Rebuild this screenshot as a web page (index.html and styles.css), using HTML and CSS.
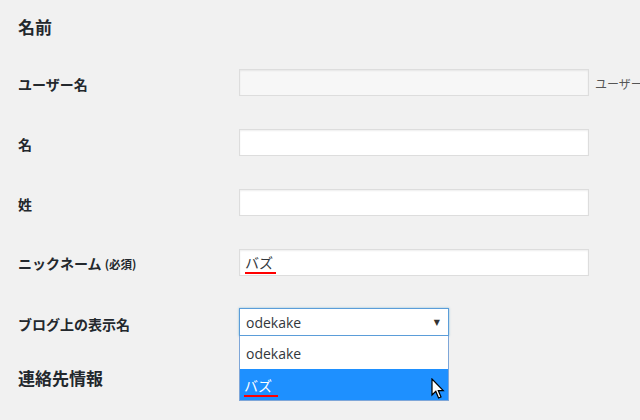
FILE: index.html
```html
<!DOCTYPE html>
<html lang="ja">
<head>
<meta charset="utf-8">
<link rel="stylesheet" href="styles.css">
</head>
<body>
<div class="page">
  <h2 class="heading first">名前</h2>
  <div class="rows">
    <div class="row">
      <label class="label">ユーザー名</label>
      <div class="field">
        <div class="input disabled"></div>
        <span class="desc">ユーザー</span>
      </div>
    </div>
    <div class="row">
      <label class="label">名</label>
      <div class="field"><div class="input"></div></div>
    </div>
    <div class="row">
      <label class="label">姓</label>
      <div class="field"><div class="input"></div></div>
    </div>
    <div class="row">
      <label class="label">ニックネーム <span class="req">(必須)</span></label>
      <div class="field"><div class="input"><span class="ime">バズ</span></div></div>
    </div>
    <div class="row">
      <label class="label">ブログ上の表示名</label>
      <div class="field">
        <div class="select-wrap">
          <div class="select">
            <span>odekake</span>
            <span class="arrow">▼</span>
          </div>
          <ul class="dropdown">
            <li class="option">odekake</li>
            <li class="option active"><span class="ime">バズ</span></li>
          </ul>
          <svg class="cursor" width="14" height="22" viewBox="0 0 14 22">
            <path d="M1 1 L1 17 L4.8 13.4 L7.6 20 L10 19 L7.3 12.6 L12.3 12.6 Z" fill="#fff" stroke="#000" stroke-width="1.2" stroke-linejoin="miter"/>
          </svg>
        </div>
      </div>
    </div>
  </div>
  <h2 class="heading second">連絡先情報</h2>
</div>
</body>
</html>
```
FILE: styles.css
```css
html, body {
  margin: 0;
  padding: 0;
  background: #f1f1f1;
  width: 640px;
  height: 420px;
  overflow: hidden;
}
body {
  font-family: "Noto Sans CJK JP", "Noto Sans", sans-serif;
  color: #23282d;
}
.page {
  padding: 15px 0 0 18px;
}
.heading {
  margin: 0;
  font-size: 17px;
  line-height: 24px;
  font-weight: 700;
  color: #23282d;
}
.heading.first {
  margin-bottom: 13px;
}
.heading.second {
  margin-top: 14px;
}
.rows {
  display: flex;
  flex-direction: column;
}
.row {
  height: 60px;
  display: flex;
  align-items: center;
}
.label {
  flex: 0 0 221px;
  width: 221px;
  font-size: 14px;
  font-weight: 600;
  line-height: 20px;
  padding-top: 3px;
  white-space: nowrap;
}
.req {
  font-size: 11.5px;
  font-weight: 600;
}
.field {
  display: flex;
  align-items: center;
  white-space: nowrap;
  flex: 0 0 auto;
}
.input {
  box-sizing: border-box;
  flex: 0 0 350px;
  width: 350px;
  height: 27px;
  background: #fff;
  border: 1px solid #ddd;
  box-shadow: inset 0 1px 2px rgba(0,0,0,0.07);
  display: flex;
  align-items: center;
  padding-left: 5px;
  font-size: 14px;
  color: #32373c;
}
.input.disabled {
  background: #f7f7f7;
}
.desc {
  margin-left: 6px;
  padding-top: 2px;
  font-size: 12px;
  color: #555;
}
.ime {
  display: inline-block;
  line-height: 19px;
  border-bottom: 2px solid #f00;
  padding-right: 3px;
  margin-top: 2px;
}
.select-wrap {
  position: relative;
  width: 210px;
}
.select {
  box-sizing: border-box;
  width: 210px;
  height: 28px;
  background: #fff;
  border: 1px solid #5b9dd9;
  box-shadow: 0 0 2px rgba(30,140,190,0.5);
  display: flex;
  align-items: center;
  justify-content: space-between;
  padding: 0 8px 0 6px;
  font-family: "Open Sans", "Noto Sans", sans-serif;
  font-size: 14px;
  color: #32373c;
}
.arrow {
  font-family: "DejaVu Sans", sans-serif;
  font-size: 8px;
  color: #333;
}
.dropdown {
  position: absolute;
  top: 28px;
  left: 0;
  box-sizing: border-box;
  width: 210px;
  margin: 0;
  padding: 0;
  list-style: none;
  background: #fff;
  border: 1px solid #7ea6d8;
  border-top: none;
}
.option {
  height: 33px;
  display: flex;
  align-items: center;
  padding-left: 6px;
  padding-top: 1px;
  box-sizing: border-box;
  font-family: "Open Sans", "Noto Sans", sans-serif;
  font-size: 14px;
  color: #32373c;
}
.option.active {
  background: #1e90ff;
  color: #fff;
  padding-left: 4px;
  padding-top: 0;
  font-family: "Noto Sans CJK JP", sans-serif;
  height: 31px;
}
.option.active .ime {
  padding-right: 6px;
  margin-top: 4px;
}
.cursor {
  position: absolute;
  left: 192px;
  top: 70px;
}
```
